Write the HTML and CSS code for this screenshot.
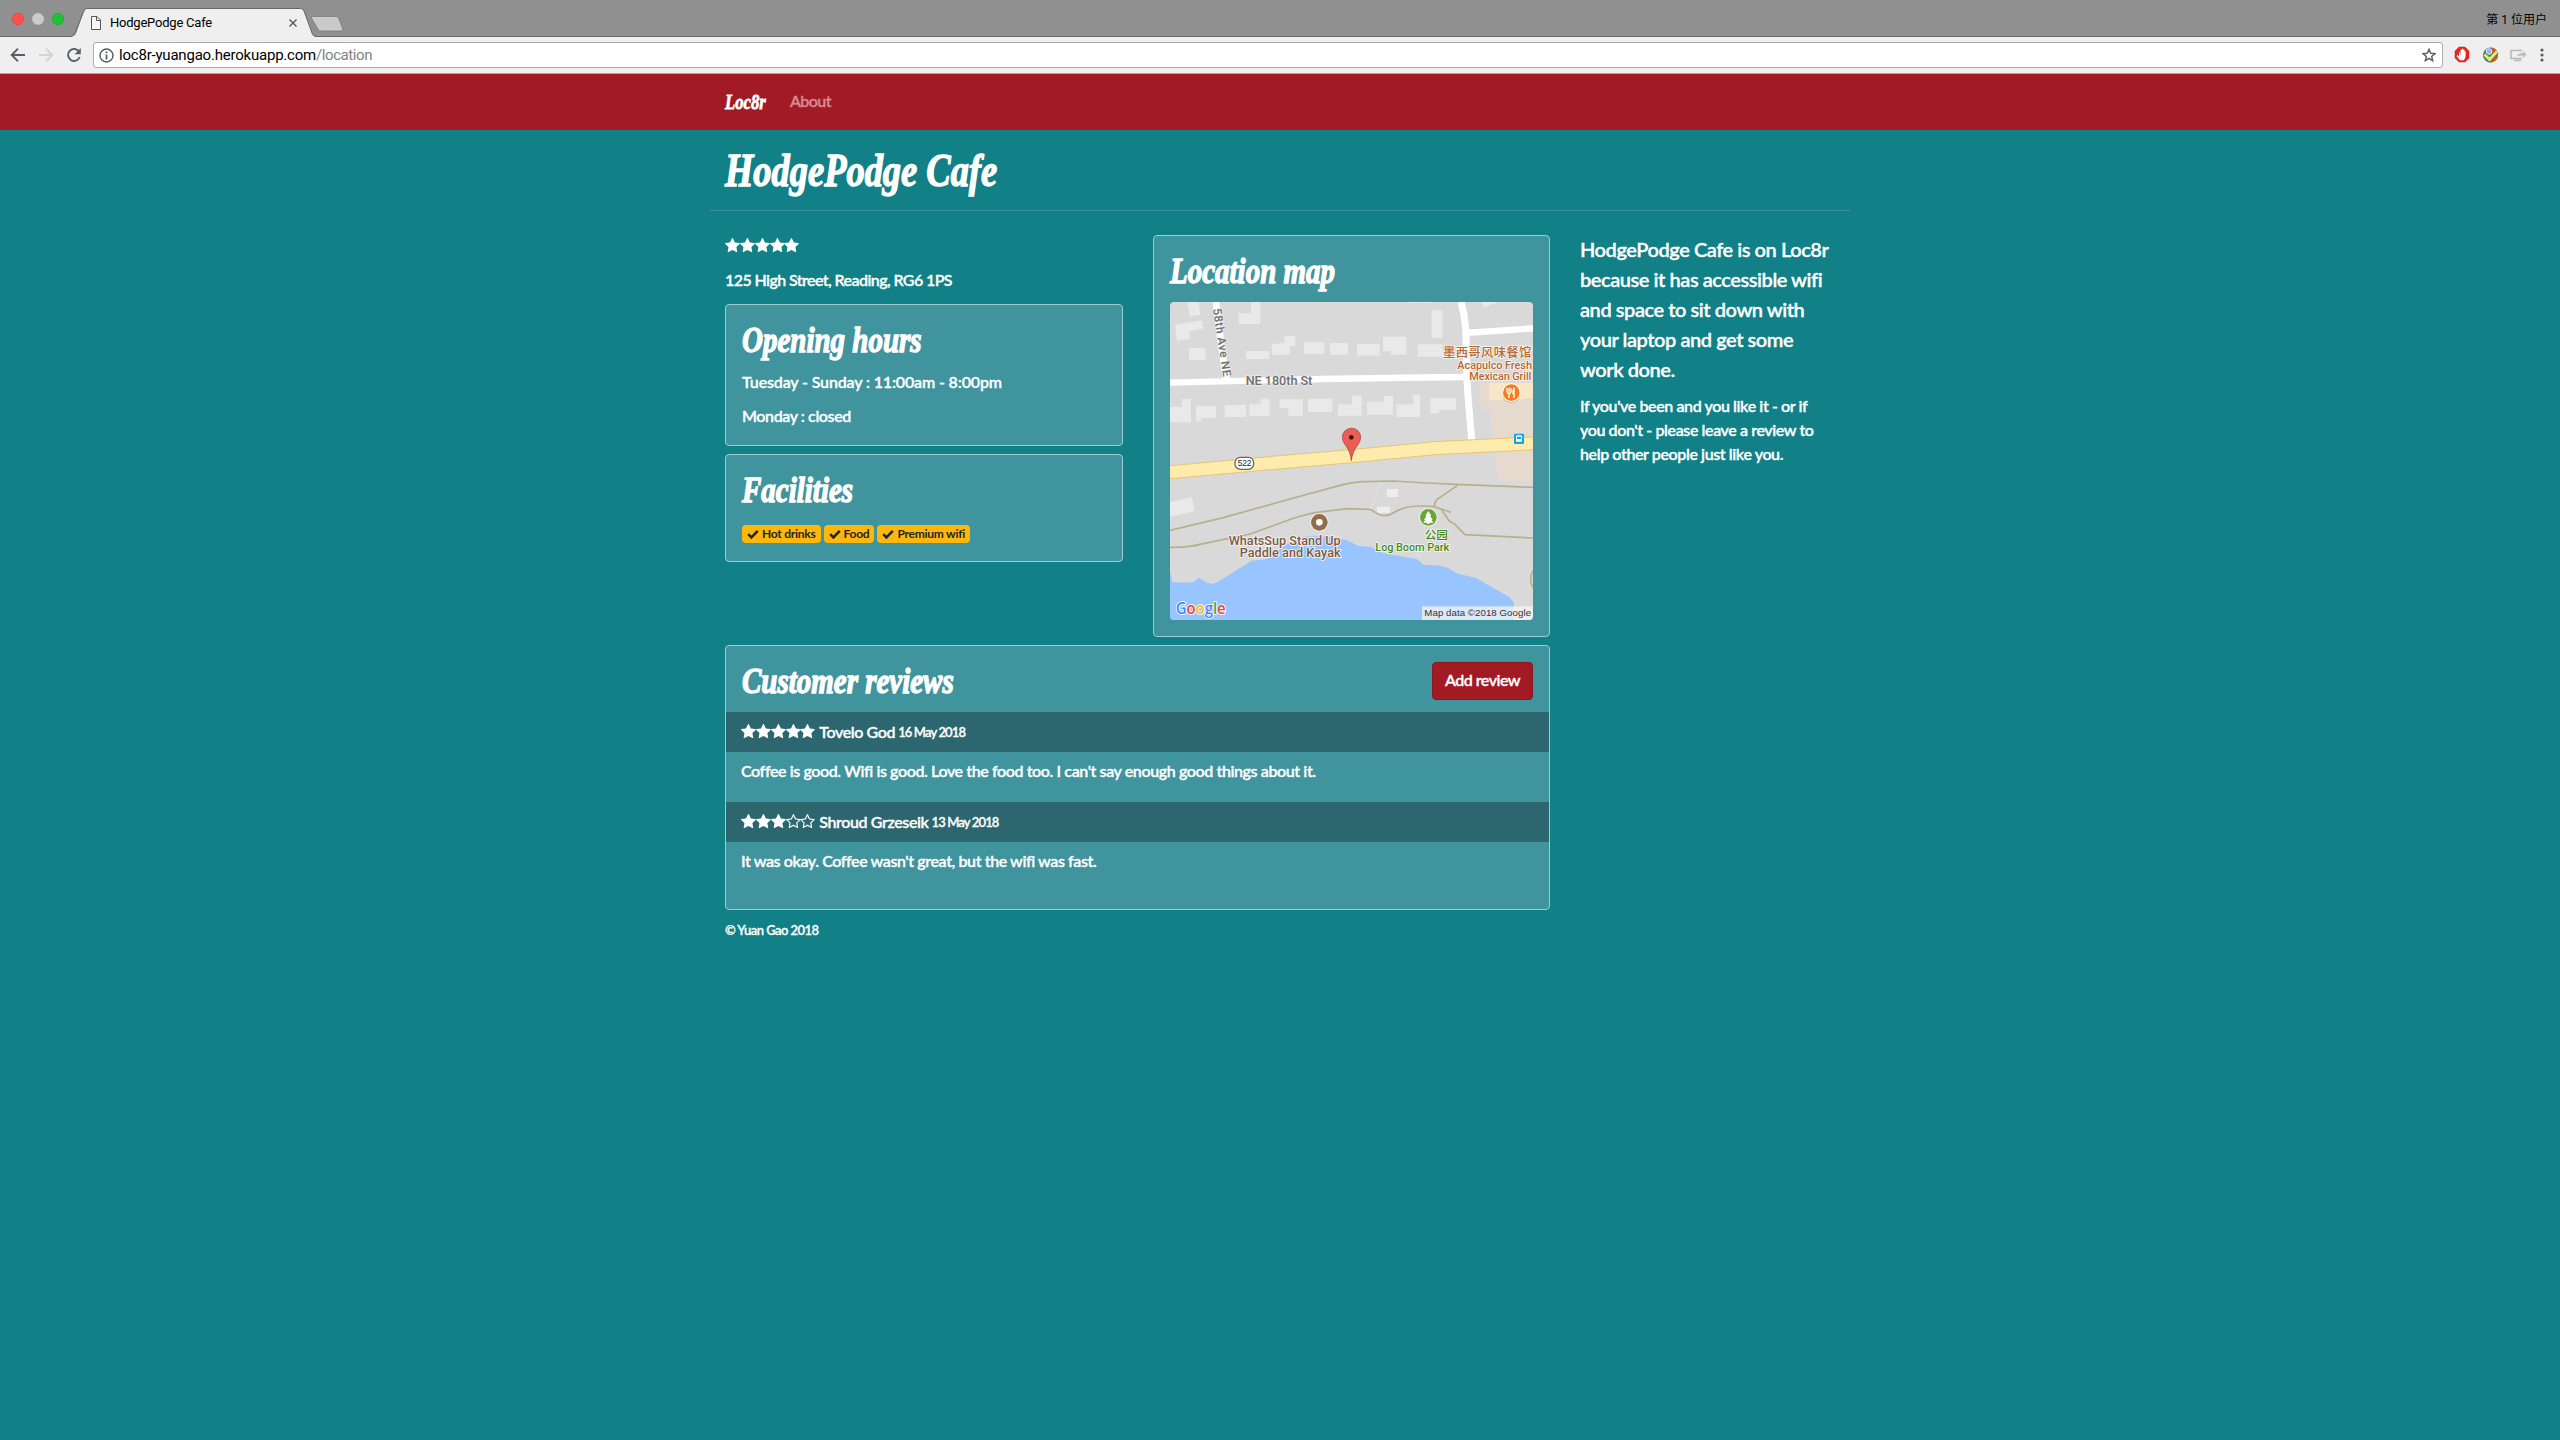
FILE: index.html
```html
<!DOCTYPE html>
<html lang="en">
<head>
<meta charset="utf-8">
<title>HodgePodge Cafe</title>
<link rel="stylesheet" href="styles.css">
</head>
<body>
<svg class="defs" width="0" height="0">
  <symbol id="star" viewBox="0 0 1664 1664"><path d="M1664 615q0 22-26 48l-363 354 86 500q1 7 1 20 0 21-10.500 35.500t-30.500 14.500q-19 0-40-12l-449-236-449 236q-22 12-40 12-21 0-31.500-14.500t-10.500-35.500q0-6 2-20l86-500-364-354q-25-27-25-48 0-37 56-46l502-73 225-455q19-41 49-41t49 41l225 455 502 73q56 9 56 46z"/></symbol>
  <symbol id="star-o" viewBox="0 0 1664 1664"><path d="M1137 967l306-297-422-62-189-382-189 382-422 62 306 297-73 421 378-199 377 199zm527-352q0 22-26 48l-363 354 86 500q1 7 1 20 0 50-41 50-19 0-40-12l-449-236-449 236q-22 12-40 12-21 0-31.500-14.500t-10.500-35.500q0-6 2-20l86-500-364-354q-25-27-25-48 0-37 56-46l502-73 225-455q19-41 49-41t49 41l225 455 502 73q56 9 56 46z"/></symbol>
  <symbol id="check" viewBox="0 0 12 12"><path d="M1.200 6.200l3.200 3.200 6.400-6.600" fill="none" stroke="currentColor" stroke-width="2.500"/></symbol>
</svg>

<header class="browser">
  <div class="tabstrip">
    <svg class="lights" width="72" height="37"><g stroke-width=".7"><circle cx="18" cy="19" r="5.800" fill="#ff5149" stroke="#e0443e"/><circle cx="38" cy="19" r="5.800" fill="#cbcbcb" stroke="#bdbdbd"/><circle cx="58" cy="19" r="5.800" fill="#20c235" stroke="#1aa82b"/></g></svg>
    <div class="tab">
      <svg class="tab-shape" width="274" height="37"><path d="M0 36.500C3 36 4 34 5 31L11.500 12Q12.500 9 14.500 8.500H228.500Q231 8.500 232 11L240 33Q241 36.500 244 36.500V37H0z" fill="#efefef"/><path d="M0 36.500L3 33L11.500 12Q12.500 9 14.500 8.500H228.500Q231 8.500 232 11L240 33Q241 36.500 244 36.500" fill="none" stroke="#666"/><path d="M240.500 16.500H264q2 0 2.600 1.500l4 10.500q.8 2.500-1.600 2.500H249q-2 0-2.800-1.600L239.500 18q-.5-1.500 1-1.500z" fill="#cacaca" stroke="#7b7b7b" stroke-width=".8"/></svg>
      <svg class="doc" width="10" height="14" fill="#f6f6f6" stroke="#555"><path d="M.5.5h5.500l3.500 3.500v9.500h-9zM5.500.5v4h4"/></svg>
      <span class="tab-title">HodgePodge Cafe</span>
      <svg class="close" width="8" height="8" stroke="#555" stroke-width="1.400"><path d="M.5.500l7 7M7.500.500l-7 7"/></svg>
    </div>
    <span class="profile">第 1 位用户</span>
  </div>
  <div class="toolbar">
    <svg class="nav-icons" width="93" height="36" fill="none" stroke-width="1.900"><path d="M25 18H12.500M18 11.700L11.700 18L18 24.300" stroke="#5a5d61"/><path d="M39 18H51.500M46 11.700L52.300 18L46 24.300" stroke="#d2d3d5"/><path d="M79.300 15A6 6 0 1 0 79.700 20" stroke="#5a5d61"/><path d="M80.800 11v6.200h-6.200z" fill="#5a5d61"/></svg>
    <div class="omnibox">
      <svg width="15" height="15" fill="none" stroke="#555a5e"><circle cx="7.500" cy="7.500" r="6.500" stroke-width="1.400"/><path d="M7.500 6.500v5M7.500 3.500v1.700" stroke-width="1.700"/></svg>
      <span class="url">loc8r-yuangao.herokuapp.com<span class="path">/location</span></span>
      <svg class="bookmark" width="14" height="14" fill="none" stroke="#5a5d61" stroke-width="1.400"><path d="M7 1.300l1.700 4 4.300.3-3.300 2.900 1 4.200L7 10.400l-3.700 2.300 1-4.200L1 5.600l4.300-.3z"/></svg>
    </div>
    <svg class="extensions" width="117" height="36">
      <path d="M16 10h6l4 4v7l-4 4h-6l-4-4v-7z" fill="#e8281e" stroke="#c41c14" stroke-width=".5"/><path d="M16 14.500v5l-1.600-1.500-.9.900 3.500 4.300h4l1.600-3.500v-5.500h-1.200v3.500-5.200h-1.400v5-5.800h-1.300v5.800-4.500h-1.200v5z" fill="#fff"/>
      <circle cx="47.500" cy="18" r="7.500" fill="#3c76bb"/><path d="M48 10.500a7.500 7.500 0 0 1 5 12.500l-5 2.500z" fill="#dc5428"/><circle cx="46" cy="14.500" r="2.800" fill="#8cb6e4" stroke="#e8f1fb"/><path d="M41.500 17.500l5 5 7.500-8" fill="none" stroke="#567a22" stroke-width="4.500"/><path d="M41.500 17.500l5 5 7.500-8" fill="none" stroke="#dfef72" stroke-width="3"/>
      <path d="M79 21.500H68V13.500h11M71 23.500h7" fill="none" stroke="#b8b8b8" stroke-width="1.500"/><path d="M74 19q1-2.700 4-2.700h2v-2.200l3.500 3.400-3.500 3.400v-2.300z" fill="#bbb"/>
      <g fill="#5a5d61"><circle cx="99" cy="13" r="1.600"/><circle cx="99" cy="18" r="1.600"/><circle cx="99" cy="23" r="1.600"/></g>
    </svg>
  </div>
</header>

<nav class="navbar"><div class="container">
  <a class="brand script"><span>Loc8r</span></a>
  <a class="about">About</a>
</div></nav>

<main class="container page">
  <div class="title"><h1 class="script"><span>HodgePodge Cafe</span></h1></div>
  <div class="columns">
    <div class="main">
      <div class="top">
        <section class="left">
          <div class="rating"><svg><use href="#star"/></svg><svg><use href="#star"/></svg><svg><use href="#star"/></svg><svg><use href="#star"/></svg><svg><use href="#star"/></svg></div>
          <p class="address">125 High Street, Reading, RG6 1PS</p>
          <div class="card hours">
            <h2 class="script"><span>Opening hours</span></h2>
            <p class="open">Tuesday - Sunday : 11:00am - 8:00pm</p>
            <p>Monday : closed</p>
          </div>
          <div class="card facilities">
            <h2 class="script"><span>Facilities</span></h2>
            <div class="badges">
              <span class="badge"><svg><use href="#check"/></svg>Hot drinks</span>
              <span class="badge"><svg><use href="#check"/></svg>Food</span>
              <span class="badge"><svg><use href="#check"/></svg>Premium wifi</span>
            </div>
          </div>
        </section>
        <section class="card map-card">
          <h2 class="script"><span>Location map</span></h2>
          <svg class="map" viewBox="90 246 1089 954">
            <rect x="90" y="246" width="1089" height="954" fill="#d9d9d9"/>
            <g fill="#e9e9e9">
              <path d="M142 246h34l5 38-32 5zM105 314l81-13 3 25-41 8 3 23-40 5zM147 384h50v36h-50zM296 280h37v-34h28v66h-65zM318 393h70v24h-70zM395 372l39-3v-22h32v32h-16v24l-54 3zM492 367h61v35h-61zM570 369h54v35h-54zM651 371h68v36h-68zM729 350h70v54h-46v-10h-24zM833 373h75v37h-75zM874 271h34v83h-34zM1025 246h50l-43 16z"/>
              <path d="M90 561h36v-24h27v70H90zM168 558h60v36h-44v10h-16zM254 555h64v36h-64zM328 553h34v-17h27v53h-61zM418 538h71v50h-44v-23h-27zM504 536h73v40h-73zM594 553h42v-26h29v60h-71zM681 545h51v-17h27v56h-78zM769 553h50v-28h21v66h-71zM871 534h77v36h-50v10h-27zM806 246h67v3h-67z"/>
              <path d="M90 847l65-16 10 42-75 18z"/><path d="M740 807h34v24h-34zM711 860h39v18h-39z" fill="#eee"/>
            </g>
            <path d="M1179 335v450h-103l-26-215h-25l-7-84h150z" fill="#e5dacd"/><path d="M1048 490h131v45l-131 6z" fill="#f7e7c4"/>
            <g fill="none" stroke="#fff"><path d="M90 488C380 480 650 474 985 471" stroke-width="19"/><path d="M228 246l12 100 18 130" stroke-width="20"/><path d="M963 246c18 60 15 110 17 210 3 90 12 150 15 208" stroke-width="21"/><path d="M975 339l204-14" stroke-width="19"/></g>
            <path d="M90 757L360 732 640 708 890 684 1179 670" fill="none" stroke="#e5c576" stroke-width="42"/><path d="M90 757L360 732 640 708 890 684 1179 670" fill="none" stroke="#ffebac" stroke-width="36"/>
            <g fill="none" stroke="#b6b08d" stroke-width="5"><path d="M90 931L250 893 450 837 600 796Q655 783 680 785L760 783 860 789 950 793 1179 802"/><path d="M90 982Q145 983 190 971L330 942 460 895Q490 885 525 878L620 866 690 868 715 883Q740 893 765 876Q800 852 882 860L933 877M953 796L890 839Q882 850 883 860M905 870L928 903 945 913 975 944 1179 954M1179 1052q-14 26 0 52"/></g>
            <path d="M720 790L706 836 690 864" fill="none" stroke="#eee" stroke-width="4" stroke-dasharray="4 7"/>
            <path d="M90 1054L97 1085Q132 1090 162 1085L177 1073 197 1087Q215 1096 233 1086L335 1022 379 1018 430 980 480 952Q535 942 620 960L655 978 690 980 730 1000 830 1017 852 1035 895 1036 925 1044 950 1060 1010 1075 1108 1131 1122 1148V1200H90z" fill="#98c4ff"/>
            <text x="219" y="267" transform="rotate(81.500 219 267)" class="m-road" font-size="35" textLength="206">58th Ave NE</text>
            <text x="317" y="494" class="m-road" font-size="38" textLength="200">NE 180th St</text>
            <g class="m-poi" fill="#b8682e"><text x="909" y="411" font-size="37" textLength="265" class="m-cjk">墨西哥风味餐馆</text><text x="952" y="447" font-size="33" textLength="224">Acapulco Fresh</text><text x="988" y="479" font-size="33" textLength="186">Mexican Grill</text></g>
            <circle cx="1114" cy="521" r="28" fill="#bbb"/><circle cx="1114" cy="518" r="28" fill="#fff"/><circle cx="1114" cy="518" r="25" fill="#f57f1e"/><path d="M1101 504v10q1 6 6 6v14M1107 503v12M1113 504v10q-1 6-6 6M1122 534v-31q-4 9-3 18h3" fill="none" stroke="#fff" stroke-width="4"/>
            <rect x="1122" y="641" width="30" height="31" rx="3" fill="#0fa4e9"/><rect x="1128" y="646" width="18" height="19" rx="3" fill="#fff"/><path d="M1131 650h12v7h-12zM1131 666h3v3h-3zM1140 666h3v3h-3z" fill="#0fa4e9"/>
            <rect x="285" y="712" width="56" height="36" rx="16" fill="#fff" stroke="#666" stroke-width="4"/><text x="293" y="739" font-size="25" textLength="41" fill="#222" class="m-plain">522</text>
            <path d="M634 722Q632 695 616 675Q607 664 607 652A27.500 27.500 0 0 1 662 652Q662 664 653 675Q637 695 634 722z" fill="#ea5f55" stroke="#a93430" stroke-width="2"/><circle cx="634" cy="652" r="7" fill="#4a120e"/>
            <circle cx="538" cy="907" r="28" fill="#eee"/><circle cx="538" cy="907" r="25" fill="#946c4e"/><circle cx="538" cy="907" r="10" fill="#fff"/>
            <g class="m-poi" fill="#7d5843"><text x="266" y="974" font-size="38" textLength="336">WhatsSup Stand Up</text><text x="299" y="1011" font-size="38" textLength="303">Paddle and Kayak</text></g>
            <circle cx="865" cy="892" r="28" fill="#eee"/><circle cx="865" cy="892" r="25" fill="#69a636"/><path d="M865 873l9 14h-4l8 12h-4l6 9h-12v4h-6v-4h-12l6-9h-4l8-12h-4z" fill="#fff"/>
            <g class="m-poi" fill="#428a18"><text x="854" y="957" font-size="35" textLength="70" class="m-cjk">公园</text><text x="706" y="992" font-size="33" textLength="222">Log Boom Park</text></g>
            <text x="107" y="1182" class="m-google" font-size="47" textLength="150" lengthAdjust="spacingAndGlyphs"><tspan fill="#4285f4">G</tspan><tspan fill="#ea4335">o</tspan><tspan fill="#fbbc05">o</tspan><tspan fill="#4285f4">g</tspan><tspan fill="#34a853">l</tspan><tspan fill="#ea4335">e</tspan></text>
            <rect x="846" y="1159" width="333" height="41" fill="#f5f5f5" opacity=".75"/><text x="853" y="1189" font-size="29" textLength="320" fill="#333" class="m-plain">Map data ©2018 Google</text>
          </svg>
        </section>
      </div>
      <section class="card reviews">
        <div class="reviews-head"><h2 class="script"><span>Customer reviews</span></h2><a class="btn">Add review</a></div>
        <div class="review-head"><div class="rating"><svg><use href="#star"/></svg><svg><use href="#star"/></svg><svg><use href="#star"/></svg><svg><use href="#star"/></svg><svg><use href="#star"/></svg></div><span class="name">Tovelo God</span><small>16 May 2018</small></div>
        <p class="review-text">Coffee is good. Wifi is good. Love the food too. I can't say enough good things about it.</p>
        <div class="review-head"><div class="rating"><svg><use href="#star"/></svg><svg><use href="#star"/></svg><svg><use href="#star"/></svg><svg><use href="#star-o"/></svg><svg><use href="#star-o"/></svg></div><span class="name">Shroud Grzeseik</span><small>13 May 2018</small></div>
        <p class="review-text">It was okay. Coffee wasn't great, but the wifi was fast.</p>
      </section>
    </div>
    <aside>
      <p class="lead">HodgePodge Cafe is on Loc8r<br>because it has accessible wifi<br>and space to sit down with<br>your laptop and get some<br>work done.</p>
      <p>If you've been and you like it - or if<br>you don't - please leave a review to<br>help other people just like you.</p>
    </aside>
  </div>
  <footer>© Yuan Gao 2018</footer>
</main>
</body>
</html>
```
FILE: styles.css
```css
*{box-sizing:border-box}
body{margin:0;min-height:1440px;background:#118087;color:#fff;font:600 16px/24px Lato,sans-serif;letter-spacing:-.4px;-webkit-text-stroke:.3px currentColor}
p,h1,h2{margin:0}
.defs{position:absolute}

/* browser chrome */
.browser{font-family:Roboto,"Noto Sans CJK SC",sans-serif;font-weight:400;color:#000;letter-spacing:0;-webkit-text-stroke:0}
.tabstrip{display:flex;height:37px;background:#909090;border-bottom:1px solid #666}
.lights{flex:none}
.tab{position:relative;display:flex;width:274px;height:37px;padding:16px 0 0 19px}
.tab-shape{position:absolute;left:0;top:0}
.tab>*:not(.tab-shape){position:relative}
.tab-title{width:180px;margin-left:9px;font-size:13px;line-height:14px;letter-spacing:-.22px}
.close{margin-left:-1px;margin-top:3px}
.profile{margin:8px 13px 0 auto;font-size:12px}
.toolbar{display:flex;height:37px;background:#efefef;border-bottom:1px solid #aaa}
.omnibox{display:flex;align-items:center;flex:1;height:26px;margin-top:5px;padding:0 6px 0 5px;background:#fff;border:1px solid #adadad;border-radius:3px}
.url{margin-left:5px;font-size:15px;letter-spacing:-.21px}
.path{color:#848484;letter-spacing:-.42px}
.bookmark{margin-left:auto}

/* headings: heavy narrow italic */
.script{font-family:"Liberation Serif",serif;font-weight:700;font-style:italic;letter-spacing:0;-webkit-text-stroke:1.4px #fff}
.script span{display:inline-block;white-space:nowrap;transform:scaleX(.805);transform-origin:left}
h1{font-size:46px;line-height:56px}
h1.script span{transform:scaleX(.792)}
h2{font-size:36px;line-height:38px}

.container{width:1140px;margin:0 auto;padding:0 15px}
.navbar{height:56px;background:#a21a24}
.navbar .container{display:flex;align-items:center;height:100%}
.brand{width:65px;font-size:22px;-webkit-text-stroke-width:.8px}
.brand.script span{transform:scaleX(.76)}
.about{color:#d48c91;letter-spacing:-.59px;line-height:24px;padding-bottom:2px}
.title{height:81px;margin:0 -15px;padding:13px 15px;border-bottom:1px solid #3e929b}
.columns{display:flex;gap:30px;padding-top:24px}
.main{width:825px}
.top{display:flex;gap:30px;height:402px;margin-bottom:8px}
.left{width:398px}
.rating{display:flex}
.rating svg{width:14.860px;height:14.860px;fill:#fff}
.left>.rating{height:33px;padding-top:3px}
.address{margin-bottom:12px;letter-spacing:-.59px}
.card{background:#3f949e;border:1px solid #9bcdd2;border-radius:4px}
.hours{height:142px;padding:16px;margin-bottom:8px}
.hours h2{margin-bottom:11px}
.hours p{margin-bottom:10px}
.hours .open{letter-spacing:-.15px}
.facilities{height:108px;padding:16px}
.badges{display:flex;gap:3px;margin-top:16px}
.badge{display:flex;align-items:center;height:18px;padding:0 5px;background:#ffb70c;border-radius:4px;color:#212529;font-size:12px;font-weight:700;letter-spacing:-.25px;-webkit-text-stroke:0}
.badge svg{width:12px;height:12px;margin-right:3px}
.map-card{width:397px;padding:16px}
.map{display:block;width:363px;height:318px;margin-top:12px;border-radius:4px;letter-spacing:0;-webkit-text-stroke:0}
.map text{font-family:Roboto,sans-serif;font-weight:500}
.map .m-road{fill:#707070;stroke:#eee;stroke-width:4px;paint-order:stroke}
.map .m-poi text{stroke:#f5f5f5;stroke-width:5px;paint-order:stroke}
.map .m-cjk{font-family:"Noto Sans CJK SC",sans-serif}
.map .m-plain{font-family:"Liberation Sans",sans-serif}
.map .m-google{font-family:"Open Sans",sans-serif;font-weight:600;stroke:#fff;stroke-width:5px;paint-order:stroke}
.reviews{height:265px}
.reviews-head{display:flex;justify-content:space-between;height:66px;padding:16px}
.btn{display:flex;align-items:center;justify-content:center;width:101px;height:38px;padding-bottom:2px;background:#a21a24;border:1px solid #8b1720;border-radius:4px;letter-spacing:-.52px}
.review-head{display:flex;align-items:center;height:40px;padding:0 0 1px 15px;background:#2c666e}
.name{margin:0 3px 0 4px}
small{font-size:13px;letter-spacing:-.87px}
.review-text{height:50px;padding:7px 15px}
aside{margin-top:-1px}
aside p{white-space:nowrap}
.lead{font-size:20px;line-height:30px;margin-bottom:10px;letter-spacing:-.44px}
footer{font-size:13px;margin-top:8px;letter-spacing:-.55px}
```
